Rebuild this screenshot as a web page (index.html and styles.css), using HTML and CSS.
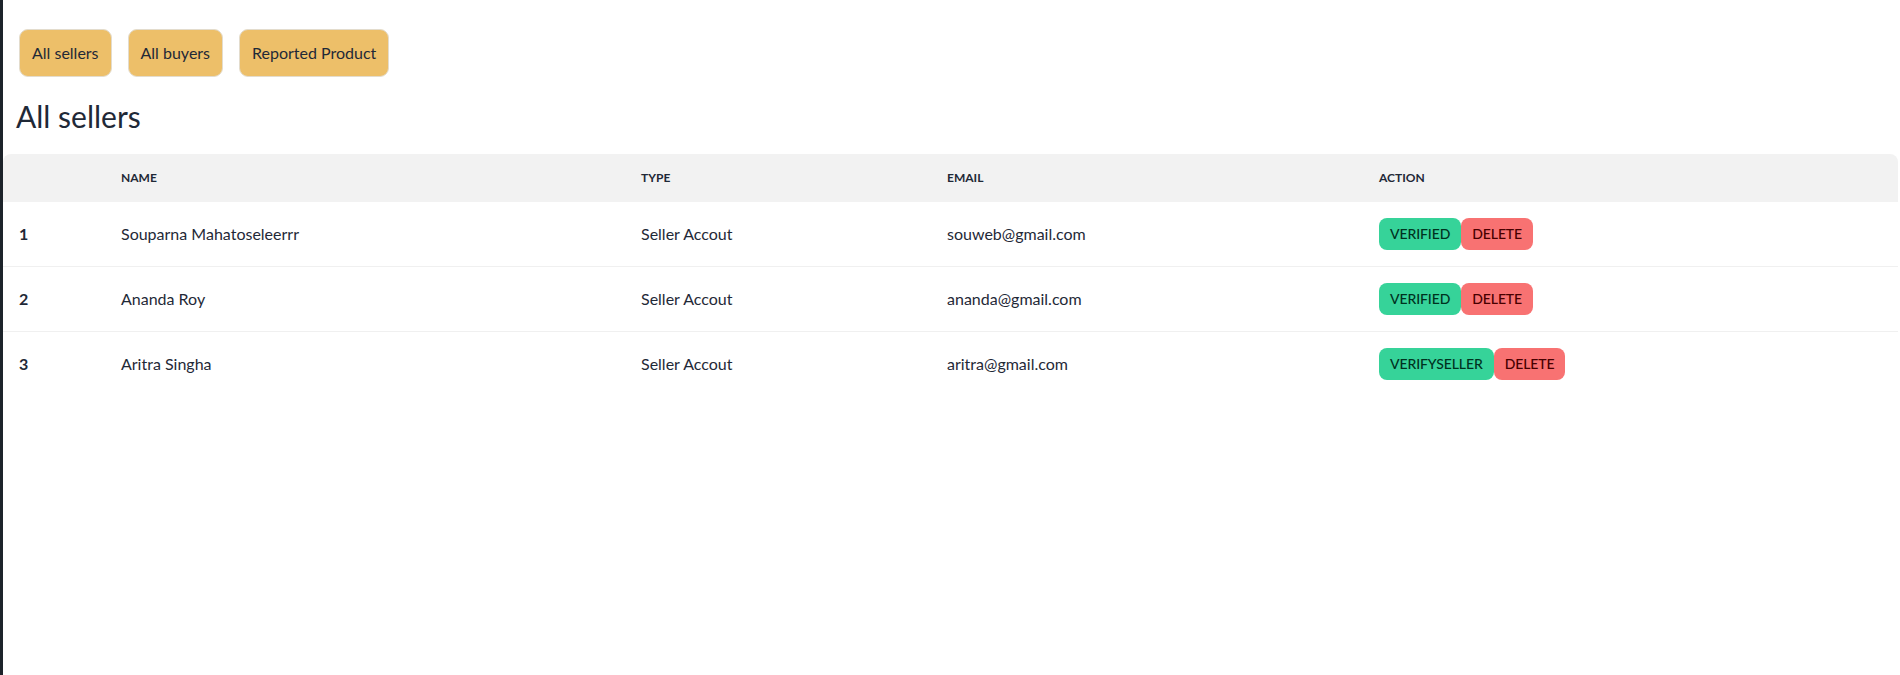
FILE: index.html
```html
<!DOCTYPE html>
<html>
<head>
<meta charset="utf-8">
<title>All sellers</title>
<link rel="stylesheet" href="styles.css">
</head>
<body>
<div class="page">
  <nav class="tabs">
    <button class="tab">All sellers</button>
    <button class="tab">All buyers</button>
    <button class="tab">Reported Product</button>
  </nav>
  <h2 class="title">All sellers</h2>
  <div class="table-wrap">
    <table class="table">
      <colgroup>
        <col class="c-num"><col class="c-name"><col class="c-type"><col class="c-email"><col class="c-action">
      </colgroup>
      <thead>
        <tr><th></th><th>Name</th><th>Type</th><th>Email</th><th>Action</th></tr>
      </thead>
      <tbody>
        <tr>
          <td class="num">1</td><td>Souparna Mahatoseleerrr</td><td>Seller Accout</td><td>souweb@gmail.com</td>
          <td><div class="actions"><button class="btn btn-success">Verified</button><button class="btn btn-error">Delete</button></div></td>
        </tr>
        <tr>
          <td class="num">2</td><td>Ananda Roy</td><td>Seller Accout</td><td>ananda@gmail.com</td>
          <td><div class="actions"><button class="btn btn-success">Verified</button><button class="btn btn-error">Delete</button></div></td>
        </tr>
        <tr>
          <td class="num">3</td><td>Aritra Singha</td><td>Seller Accout</td><td>aritra@gmail.com</td>
          <td><div class="actions"><button class="btn btn-success">verifyseller</button><button class="btn btn-error">Delete</button></div></td>
        </tr>
      </tbody>
    </table>
  </div>
</div>
</body>
</html>
```
FILE: styles.css
```css
html, body {
  margin: 0;
  padding: 0;
  background: #ffffff;
}
body {
  font-family: Lato, "Liberation Sans", sans-serif;
  color: #1f2937;
  font-size: 16px;
  line-height: 24px;
}
.page {
  min-height: 100vh;
  border-left: 3px solid #1d232a;
  padding-right: 2px;
  box-sizing: border-box;
}
.tabs {
  display: flex;
  gap: 16px;
  padding: 29px 0 0 16px;
}
.tab {
  font-family: inherit;
  font-size: 16px;
  line-height: 24px;
  color: #1f2937;
  background: #edbf69;
  border: 1px solid #e3dccd;
  border-radius: 9px;
  padding: 11px 12px;
  margin: 0;
  cursor: pointer;
}
.title {
  margin: 21px 0 0 13px;
  font-size: 30px;
  line-height: 36px;
  font-weight: 400;
  color: #1f2937;
}
.table-wrap {
  margin-top: 20px;
}
.table {
  width: 100%;
  table-layout: fixed;
  border-collapse: separate;
  border-spacing: 0;
}
.c-num { width: 102px; }
.c-name { width: 520px; }
.c-type { width: 306px; }
.c-email { width: 432px; }
.table th {
  background: #f2f2f2;
  font-size: 12px;
  line-height: 16px;
  font-weight: 700;
  text-transform: uppercase;
  text-align: left;
  padding: 16px;
  color: #1f2937;
  white-space: nowrap;
}
.table th:first-child { border-top-left-radius: 8px; }
.table th:last-child { border-top-right-radius: 8px; }
.table td {
  padding: 16px;
  text-align: left;
  white-space: nowrap;
  border-bottom: 1px solid #f0f0f0;
  vertical-align: middle;
}
.table tbody tr:last-child td { border-bottom: none; }
.table td.num { font-weight: 700; }
.actions {
  display: flex;
  height: 32px;
}
.btn {
  font-family: inherit;
  height: 32px;
  padding: 0 11px;
  font-size: 14px;
  line-height: 20px;
  font-weight: 500;
  letter-spacing: -0.1px;
  text-transform: uppercase;
  border: none;
  border-radius: 8px;
  margin: 0;
  cursor: pointer;
}
.btn-success { background: #36d399; color: #00321f; }
.btn-error { background: #f87272; color: #470000; }
```
